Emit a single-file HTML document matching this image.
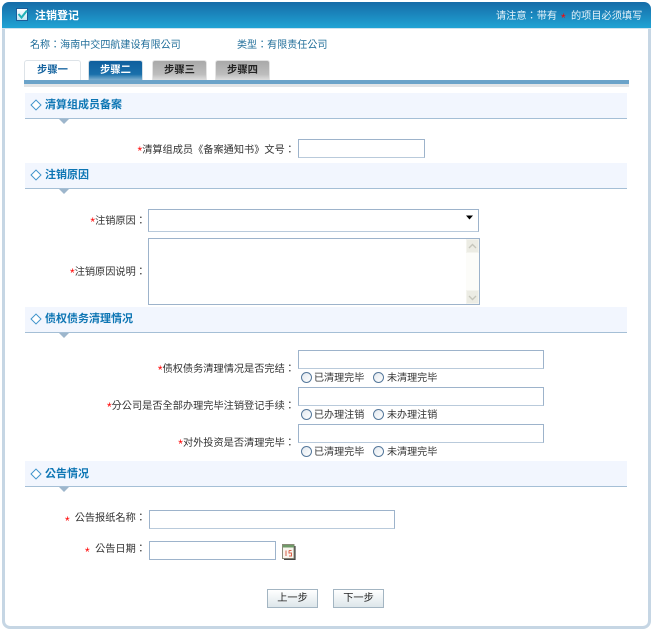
<!DOCTYPE html>
<html lang="zh-TW">
<head>
<meta charset="utf-8">
<title>注销登记</title>
<style>
html,body{margin:0;padding:0;background:#fff;}
body{width:653px;height:631px;position:relative;overflow:hidden;font-family:"Liberation Sans","Noto Sans CJK TC",sans-serif;font-size:10.2px;color:#333;}
#p{position:absolute;left:0;top:0;width:653px;height:631px;filter:blur(0.3px);}
#p div,#p svg{position:absolute;}
.t{white-space:nowrap;line-height:14px;height:14px;}
.n{font-size:10.05px;}
.r{text-align:right;}
.s{color:#f00;font-size:12px;position:relative;top:2px;}
.card{left:2px;top:2px;width:643px;height:623px;border:solid #c6d6e4;border-width:1px 3px 3px 3px;border-radius:8px;background:#fff;}
.head{left:2px;top:2px;width:649px;height:27px;border-radius:7px 7px 0 0;background:linear-gradient(#166ca8,#20a3d4);border-bottom:1px solid #cfe3ee;box-sizing:border-box;}
.tab{top:60px;height:20px;width:54px;line-height:19px;text-align:center;font-weight:bold;font-size:10.3px;box-sizing:border-box;border-radius:3px 3px 0 0;}
.sec{left:25px;width:602px;height:25px;background:#f2f6fe;border-bottom:1px solid #a5bfd6;box-sizing:content-box;}
.sect{left:45px;font-weight:bold;color:#0e76b4;font-size:11px;}
.dia{left:32px;width:6px;height:6px;border:1px solid #3f93cb;transform:rotate(45deg);background:#fff;}
.tri{left:59px;width:0;height:0;border-left:5px solid transparent;border-right:5px solid transparent;border-top:5px solid #9db6cc;}
.in{background:#fff;border:1px solid #9db3cb;box-sizing:border-box;border-bottom-color:#b9cadb;}
.rad{width:11px;height:11px;border-radius:50%;border:1px solid #55789b;background:linear-gradient(135deg,#e2e8ee,#fff);box-sizing:border-box;}
.btn{top:589px;width:51px;height:19px;box-sizing:border-box;border:1px solid #a3b5c2;background:linear-gradient(#fff,#dde6ea);text-align:center;line-height:18px;color:#222;}
</style>
</head>
<body>
<div id="p">
<div class="card"></div>
<div class="head"></div>
<div style="left:16px;top:8px;width:10px;height:11px;background:linear-gradient(#fff,#bfe6f2);border:1px solid #1b5d99;"></div>
<svg style="left:16px;top:8px" width="13" height="13" viewBox="0 0 13 13"><path d="M2.5 6 L5.5 9.5 L11 2.5" fill="none" stroke="#1fb2b8" stroke-width="2"/></svg>
<div class="t" style="left:35px;top:9px;color:#fff;font-weight:bold;font-size:11px;">注销登记</div>
<div class="t" style="left:496px;top:10px;color:#e6f3fa;">请注意：带有</div>
<div class="t" style="left:561px;top:9px;"><span class="s">*</span></div>
<div class="t" style="left:571px;top:10px;color:#e6f3fa;">的项目必须填写</div>

<div class="t n" style="left:30px;top:39px;color:#1f6d99;">名称：海南中交四航建设有限公司</div>
<div class="t n" style="left:237px;top:39px;color:#1f6d99;">类型：有限责任公司</div>

<div class="tab" style="left:24px;width:57px;background:#fff;border:1px solid #dde3e8;border-bottom:0;color:#14639f;">步骤一</div>
<div class="tab" style="left:88px;width:55px;background:linear-gradient(#0f5f9e,#1a70ab 70%,#7fb0cf);border:1px solid #d5dfe6;border-bottom:0;color:#fff;">步骤二</div>
<div class="tab" style="left:152px;width:55px;background:linear-gradient(#a9a9a9,#bdbdbd 70%,#dedede);border:1px solid #e3e3e3;border-bottom:0;color:#222;">步骤三</div>
<div class="tab" style="left:215px;width:55px;background:linear-gradient(#a9a9a9,#bdbdbd 70%,#dedede);border:1px solid #e3e3e3;border-bottom:0;color:#222;">步骤四</div>
<div style="left:24px;top:80px;width:605px;height:4px;background:#6ba3c9;"></div>
<div style="left:24px;top:84px;width:605px;height:3px;background:#e2e4e6;"></div>

<div class="sec" style="top:93px;"></div><div class="dia" style="top:101px;"></div><div class="t sect" style="top:98px;">清算组成员备案</div><div class="tri" style="top:119px;"></div>
<div class="sec" style="top:163px;"></div><div class="dia" style="top:171px;"></div><div class="t sect" style="top:168px;">注销原因</div><div class="tri" style="top:189px;"></div>
<div class="sec" style="top:307px;"></div><div class="dia" style="top:315px;"></div><div class="t sect" style="top:312px;">债权债务清理情况</div><div class="tri" style="top:333px;"></div>
<div class="sec" style="top:461px;"></div><div class="dia" style="top:470px;"></div><div class="t sect" style="top:467px;">公告情况</div><div class="tri" style="top:487px;"></div>

<div class="t r" style="right:358px;top:142px;"><span class="s">*</span>清算组成员《备案通知书》文号：</div>
<div class="in" style="left:298px;top:139px;width:127px;height:19px;"></div>

<div class="t r" style="right:507px;top:213px;"><span class="s">*</span>注销原因：</div>
<div class="in" style="left:148px;top:209px;width:331px;height:23px;"></div>
<svg style="left:465px;top:214px" width="10" height="8" viewBox="0 0 10 8"><path d="M1 1.5 H8 L4.5 5.5 Z" fill="#000"/></svg>

<div class="t r" style="right:507px;top:264px;"><span class="s">*</span>注销原因说明：</div>
<div class="in" style="left:148px;top:238px;width:332px;height:67px;border-bottom-color:#9db3cb;"></div>
<div style="left:466px;top:239px;width:13px;height:65px;background:#fcfcf9;"></div>
<div style="left:466px;top:239px;width:13px;height:14px;background:#ecece4;border:1px solid #f4f4ee;box-sizing:border-box;"></div>
<div style="left:466px;top:290px;width:13px;height:14px;background:#ecece4;border:1px solid #f4f4ee;box-sizing:border-box;"></div>
<svg style="left:466px;top:239px" width="13" height="65" viewBox="0 0 13 65"><path d="M3 9 L6.5 5.5 L10 9 M3 57 L6.5 60.5 L10 57" fill="none" stroke="#c6c6bc" stroke-width="1.4"/></svg>

<div class="t r" style="right:358px;top:361px;"><span class="s">*</span>债权债务清理情况是否完结：</div>
<div class="in" style="left:298px;top:350px;width:246px;height:19px;"></div>
<div class="rad" style="left:301px;top:372px;"></div><div class="t n" style="left:314px;top:372px;">已清理完毕</div>
<div class="rad" style="left:373px;top:372px;"></div><div class="t n" style="left:387px;top:372px;">未清理完毕</div>

<div class="t r" style="right:358px;top:398px;"><span class="s">*</span>分公司是否全部办理完毕注销登记手续：</div>
<div class="in" style="left:298px;top:387px;width:246px;height:19px;"></div>
<div class="rad" style="left:301px;top:409px;"></div><div class="t n" style="left:314px;top:409px;">已办理注销</div>
<div class="rad" style="left:373px;top:409px;"></div><div class="t n" style="left:387px;top:409px;">未办理注销</div>

<div class="t r" style="right:358px;top:435px;"><span class="s">*</span>对外投资是否清理完毕：</div>
<div class="in" style="left:298px;top:424px;width:246px;height:19px;"></div>
<div class="rad" style="left:301px;top:446px;"></div><div class="t n" style="left:314px;top:446px;">已清理完毕</div>
<div class="rad" style="left:373px;top:446px;"></div><div class="t n" style="left:387px;top:446px;">未清理完毕</div>

<div class="t" style="left:65px;top:512px;"><span class="s">*</span></div>
<div class="t r" style="right:507px;top:512px;">公告报纸名称：</div>
<div class="in" style="left:149px;top:510px;width:246px;height:19px;"></div>

<div class="t" style="left:85px;top:543px;"><span class="s">*</span></div>
<div class="t r" style="right:507px;top:543px;">公告日期：</div>
<div class="in" style="left:149px;top:541px;width:127px;height:19px;border-bottom-color:#9db3cb;"></div>
<svg style="left:282px;top:544px" width="14" height="16" viewBox="0 0 14 16"><rect x="0.5" y="0.5" width="11.5" height="14" fill="#f8f5ee" stroke="#8a8a78"/><rect x="1" y="1" width="11" height="2.5" fill="#6f9a68"/><path d="M13 2 V15.5 H2" fill="none" stroke="#444" stroke-width="1.2"/><path d="M4 6.5 V12 M7 6.5 H9.5 M7 6.5 V9 H9.5 V12 H7" fill="none" stroke="#d8614a" stroke-width="1"/></svg>

<div class="btn" style="left:267px;">上一步</div>
<div class="btn" style="left:333px;">下一步</div>
</div>
</body>
</html>
